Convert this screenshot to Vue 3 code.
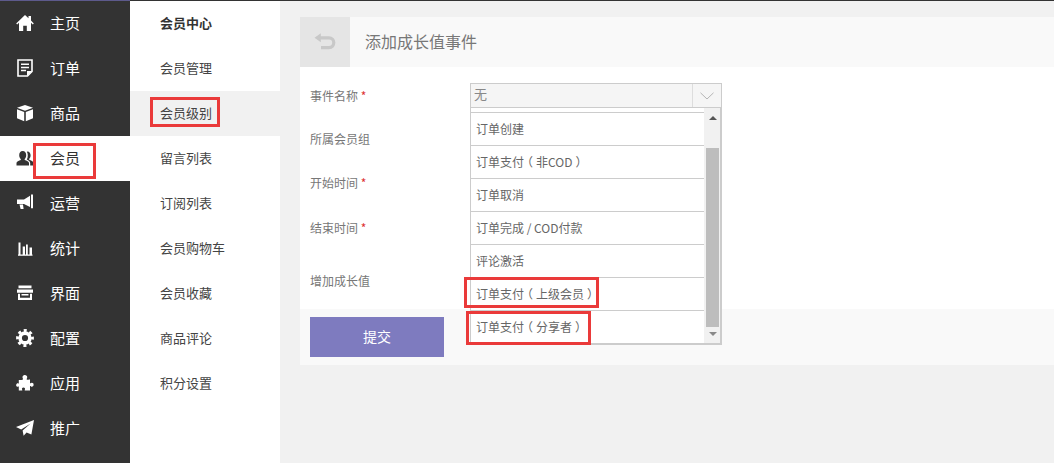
<script setup>
const navItems = [
  { name: '主页', icon: 'home' },
  { name: '订单', icon: 'order' },
  { name: '商品', icon: 'cube' },
  { name: '会员', icon: 'users', active: true },
  { name: '运营', icon: 'horn' },
  { name: '统计', icon: 'chart' },
  { name: '界面', icon: 'store' },
  { name: '配置', icon: 'cog' },
  { name: '应用', icon: 'puzzle' },
  { name: '推广', icon: 'plane' }
]
const subItems = ['会员管理', '会员级别', '留言列表', '订阅列表', '会员购物车', '会员收藏', '商品评论', '积分设置']
const fields = [
  { label: '事件名称', req: true },
  { label: '所属会员组' },
  { label: '开始时间', req: true },
  { label: '结束时间', req: true },
  { label: '增加成长值' }
]
const options = ['订单创建', '订单支付（非COD）', '订单取消', '订单完成 / COD付款', '评论激活', '订单支付（上级会员）', '订单支付（分享者）']
const optionParts = options.map((o) => o.split(/(（|）)/).filter(Boolean))
</script>

<template>
  <div class="page">
    <aside class="nav">
      <div v-for="item in navItems" :key="item.name" class="nav-item" :class="{ active: item.active }">
        <svg class="nav-icon" viewBox="0 0 18 18" aria-hidden="true">
          <path v-if="item.icon === 'home'" fill="currentColor" d="M9 1 L12.5 4.2 V2 H15 V6.6 L17.8 9.4 L16.8 10.4 L15 8.8 V17 H10.8 V11.8 H7.2 V17 H3 V8.8 L1.2 10.4 L0.2 9.4 Z" />
          <g v-else-if="item.icon === 'order'" fill="none" stroke="currentColor">
            <path stroke-width="1.6" d="M2 1 H16 V12.5 L11.5 17 H2 Z" />
            <path stroke-width="1.5" d="M5 5.2 H13 M5 8.4 H13 M5 11.6 H10" />
            <path fill="currentColor" stroke="none" d="M11 12 H16 L11 17 Z" />
          </g>
          <path v-else-if="item.icon === 'cube'" fill="currentColor" d="M9 1 L17 3.8 L9 6.8 L1 3.8 Z M1 5.2 L8.2 8 V17.2 L1 14.2 Z M17 5.2 L9.8 8 V17.2 L17 14.2 Z" />
          <path v-else-if="item.icon === 'users'" fill="currentColor" d="M6.7 2 C9 2 10.2 4 10.2 6.2 C10.2 8 9.4 9.4 8.7 10 V11 C10.6 11.6 13 12.6 13 14 V16.5 H0.5 V14 C0.5 12.6 2.9 11.6 4.8 11 V10 C4 9.4 3.2 8 3.2 6.2 C3.2 4 4.4 2 6.7 2 Z M11.5 2.6 C13.5 2.7 14.6 4.4 14.6 6.4 C14.6 8 13.9 9.2 13.2 9.8 V10.8 C14.9 11.4 17.4 12.4 17.4 13.8 V16.5 H14.2 V14 C14.2 12.7 12.6 11.3 10.8 10.5 C11.5 9.3 11.8 7.9 11.8 6.4 C11.8 5 11.5 3.7 10.9 2.7 Z" />
          <path v-else-if="item.icon === 'horn'" fill="currentColor" d="M1 5.5 H8 L14 1.8 V13 L8 10 H1 Z M15 0.5 H17 V14.2 H15 Z M3.5 10.5 H7 L7.6 15 H4.6 Z" />
          <path v-else-if="item.icon === 'chart'" fill="currentColor" d="M2.5 3.5 H4.5 V15.4 H6.7 V7.5 H9 V15.4 H10 V5.5 H11.8 V15.4 H13.5 V8.5 H16 V15.4 H16.5 V16.8 H2 V15.4 H2.5 Z" />
          <path v-else-if="item.icon === 'store'" fill="currentColor" d="M2.5 1.5 H15.5 V4.3 H2.5 Z M1 5.6 H17 V8.8 H1 Z M2 9.8 H4 V13.8 H14 V9.8 H16 V16 H2 Z M5.5 10 H12.5 V11.4 H5.5 Z" />
          <g v-else-if="item.icon === 'cog'" fill="none" stroke="currentColor">
            <circle cx="9" cy="9" r="4.9" stroke-width="3.6" />
            <circle cx="9" cy="9" r="7.5" stroke-width="2.8" stroke-dasharray="3 2.89" stroke-dashoffset="1.5" />
          </g>
          <path v-else-if="item.icon === 'puzzle'" fill="currentColor" d="M8 1.2 C9.8 0.8 11.4 1.8 11.2 3.4 C11.1 4.2 10.6 4.6 10.6 5.2 C10.6 5.8 12.8 5.8 14 5.6 V9 C14 9.6 14.6 9.3 15.2 9 C16.4 8.4 17.8 9.4 17.6 11 C17.4 12.6 16 13 15 12.4 C14.4 12 14 12 14 12.6 V16.6 H9 C8.6 16.6 8.6 16 8.9 15.6 C9.4 14.8 8.8 13.6 7.5 13.6 C6.2 13.6 5.6 14.8 6.1 15.6 C6.4 16 6.4 16.6 6 16.6 H2.8 V12.8 C2.8 12.2 2.2 12.6 1.8 12.7 C0.4 12.9 0 11.8 0.2 10.8 C0.4 9.6 1.4 9 2.2 9.4 C2.6 9.6 2.8 9.6 2.8 9.2 V6 C4.6 6 6.8 6 7 5.2 C7.2 4.6 6.6 4.2 6.5 3.4 C6.4 2.4 7 1.4 8 1.2 Z" />
          <path v-else-if="item.icon === 'plane'" fill="currentColor" d="M18 1 L15.4 15.6 L10.6 13.4 L7.6 16.8 L6.6 11.4 L14.6 4.4 L5.2 10.4 L0 8 Z" />
        </svg>
        <span class="nav-text">{{ item.name }}</span>
      </div>
      <div class="mark mark-nav"></div>
    </aside>

    <aside class="sub">
      <div class="sub-title">会员中心</div>
      <div v-for="(s, i) in subItems" :key="s" class="sub-item" :class="{ current: i === 1 }">{{ s }}</div>
      <div class="mark mark-sub"></div>
    </aside>

    <main class="content">
      <section class="panel">
        <header class="head">
          <div class="back">
            <svg width="22" height="18" viewBox="0 0 22 18" aria-hidden="true">
              <path fill="none" stroke="#c8c8c8" stroke-width="3.2" d="M5 4.8 H15 C18 4.8 19.8 7 19.8 9.6 C19.8 12.2 18 14.6 15 14.6 H7" />
              <path fill="#c8c8c8" d="M0.5 4.8 L6.8 0.3 V9.3 Z" />
            </svg>
          </div>
          <div class="title">添加成长值事件</div>
        </header>

        <div class="form">
          <div v-for="f in fields" :key="f.label" class="row">
            {{ f.label }}<span v-if="f.req" class="req">&nbsp;*</span>
          </div>
        </div>

        <footer class="foot">
          <button class="submit" type="button">提交</button>
        </footer>

        <div class="select">
          <div class="select-value">无</div>
          <div class="select-arrow">
            <svg width="14" height="8" viewBox="0 0 14 8" aria-hidden="true">
              <path fill="none" stroke="#b5b5b5" d="M0.5 0.8 L7 7 L13.5 0.8" />
            </svg>
          </div>
        </div>

        <div class="dropdown">
          <ul class="options">
            <li v-for="(parts, i) in optionParts" :key="i">
              <span
                v-for="(p, j) in parts"
                :key="j"
                :class="{ paren: p === '（' || p === '）' }"
              >{{ p }}</span>
            </li>
          </ul>
          <div class="scrollbar">
            <span class="arrow up"></span>
            <span class="thumb"></span>
            <span class="arrow down"></span>
          </div>
        </div>

        <div class="mark mark-opt1"></div>
        <div class="mark mark-opt2"></div>
      </section>
    </main>
  </div>
</template>

<style scoped>
.page {
  display: flex;
  width: 1054px;
  height: 463px;
  overflow: hidden;
  background: #f1f1f1;
  font-family: "Noto Sans CJK SC", "Liberation Sans", sans-serif;
  color: #555;
}
.nav {
  position: relative;
  flex: 0 0 130px;
  box-sizing: border-box;
  background: #333;
  border-top: 1px solid #5d5a8c;
}
.nav-item {
  display: flex;
  align-items: center;
  height: 45px;
  padding-left: 16px;
  color: #fff;
  font-size: 15px;
}
.nav-item.active {
  background: #fff;
  color: #333;
}
.nav-icon {
  flex: none;
  width: 18px;
  height: 18px;
  margin-top: -1px;
}
.nav-text {
  margin-left: 16px;
  padding-bottom: 2px;
}
.sub {
  position: relative;
  flex: 0 0 150px;
  background: #fff;
  border-top: 1px solid #333;
}
.sub-title,
.sub-item {
  height: 45px;
  line-height: 43px;
  padding-left: 30px;
  font-size: 13px;
  color: #444;
}
.sub-title {
  font-weight: 700;
  color: #333;
}
.sub-item.current {
  background: #f1f1f1;
}
.content {
  flex: 1;
  padding: 16px 0 0 20px;
  border-top: 1px solid #333;
}
.panel {
  position: relative;
  height: 348px;
  display: flex;
  flex-direction: column;
  background: #fff;
}
.head {
  display: flex;
  align-items: center;
  height: 50px;
  background: #f9f9f9;
}
.back {
  display: flex;
  align-items: center;
  justify-content: center;
  width: 50px;
  height: 50px;
  background: #e5e5e5;
}
.title {
  margin-left: 15px;
  padding-bottom: 2px;
  font-size: 16px;
  color: #777;
}
.form {
  display: grid;
  grid-template-rows: 44px 41px 47px 44px 59px;
  height: 242px;
  box-sizing: border-box;
  padding: 7px 0 0 10px;
  font-size: 12px;
  color: #777;
}
.row {
  align-self: center;
  line-height: 18px;
}
.row:last-child {
  padding-top: 3px;
}
.req {
  color: #d33;
}
.foot {
  flex: 1;
  padding: 8px 10px;
  background: #f9f9f9;
}
.submit {
  display: block;
  width: 134px;
  height: 40px;
  border: 0;
  padding: 0 0 2px;
  background: #7e7bbf;
  color: #fff;
  font-family: inherit;
  font-size: 14px;
}
.select {
  position: absolute;
  left: 170px;
  top: 66px;
  display: flex;
  width: 252px;
  height: 25px;
  box-sizing: border-box;
  border: 1px solid #ccc;
  background: #f5f5f5;
  font-size: 13px;
  color: #888;
}
.select-value {
  flex: 1;
  padding-left: 3px;
  line-height: 20px;
}
.select-arrow {
  display: flex;
  align-items: center;
  justify-content: center;
  width: 28px;
  border-left: 1px solid #ddd;
}
.dropdown {
  position: absolute;
  left: 170px;
  top: 91px;
  display: flex;
  width: 252px;
  height: 237px;
  box-sizing: border-box;
  border: 1px solid #ccc;
  border-top: 0;
  border-right-width: 2px;
  border-bottom-width: 2px;
  background: #fff;
  overflow: hidden;
}
.options {
  flex: 1;
  margin: 0;
  padding: 4px 0 0;
  list-style: none;
  font-size: 12px;
  color: #666;
}
.options li {
  height: 33px;
  box-sizing: border-box;
  border-top: 1px solid #ccc;
  padding-left: 5px;
  line-height: 31px;
}
.paren {
  padding: 0 3px;
  font-feature-settings: "halt";
}
.scrollbar {
  position: relative;
  flex: 0 0 16px;
  background: #f1f1f1;
}
.thumb {
  position: absolute;
  left: 2px;
  top: 40px;
  width: 13px;
  height: 179px;
  background: #bdbdbd;
}
.arrow {
  position: absolute;
  left: 5px;
  border-left: 4px solid transparent;
  border-right: 4px solid transparent;
}
.arrow.up {
  top: 8px;
  border-bottom: 4px solid #555;
}
.arrow.down {
  bottom: 7px;
  border-top: 4px solid #888;
}
.mark {
  position: absolute;
  box-sizing: border-box;
  border: 3px solid #ea3a3a;
  pointer-events: none;
}
.mark-nav {
  left: 33px;
  top: 142px;
  width: 63px;
  height: 36px;
}
.mark-sub {
  left: 20px;
  top: 96px;
  width: 70px;
  height: 30px;
}
.mark-opt1 {
  left: 164px;
  top: 260px;
  width: 135px;
  height: 31px;
}
.mark-opt2 {
  left: 166px;
  top: 294px;
  width: 125px;
  height: 34px;
}
</style>
